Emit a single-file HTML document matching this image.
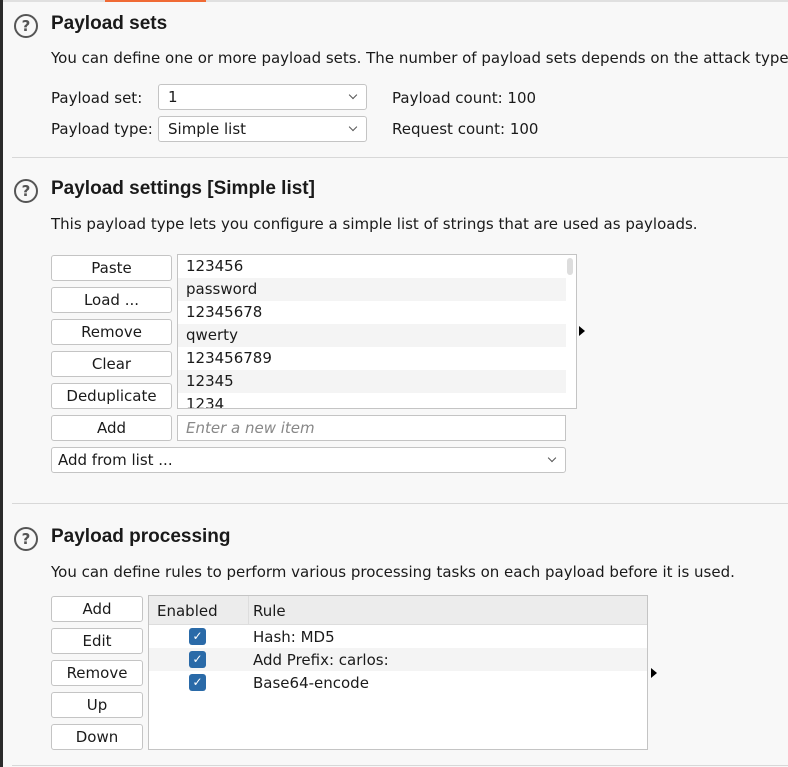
<!DOCTYPE html>
<html><head><style>
*{box-sizing:border-box;margin:0;padding:0}
body{width:788px;height:767px;background:#f8f8f8;font-family:"DejaVu Sans","Liberation Sans",sans-serif;font-size:15px;color:#1a1a1a;position:relative;overflow:hidden}
.a{position:absolute;white-space:nowrap}
.h{font-weight:bold;font-size:19px;font-family:"Liberation Sans",sans-serif}
.q{position:absolute;width:24px;height:24px;border:2px solid #555;border-radius:50%;font-size:15px;font-weight:bold;color:#555;text-align:center;line-height:20px}
.sep{position:absolute;left:12px;right:0;height:1px;background:#d8d8d8}
.btn{position:absolute;background:#fff;border:1px solid #c4c4c4;border-radius:3px;text-align:center;line-height:24px;height:26px}
.sel{position:absolute;background:#fff;border:1px solid #c4c4c4;border-radius:3px;height:26px;line-height:24px;padding-left:9px}
.sel:after{content:"";position:absolute;right:10px;top:7px;width:5px;height:5px;border-right:1px solid #555;border-bottom:1px solid #555;transform:rotate(45deg)}
.row{position:absolute;left:0;width:388px;height:23px;line-height:23px;padding-left:8px}
.cb{position:absolute;left:40px;width:17px;height:17px;background:#2a6aa8;border-radius:3px;color:#fff;font-size:12px;font-weight:bold;text-align:center;line-height:17px}
.tri{position:absolute;width:0;height:0;border-left:6px solid #000;border-top:5px solid transparent;border-bottom:5px solid transparent}
</style></head><body>
<div class="a" style="left:0;top:0;width:3px;height:767px;background:#2b2b2b"></div>
<div class="a" style="left:3px;top:0;width:785px;height:2px;background:#e0e0e0"></div>
<div class="a" style="left:105px;top:0;width:101px;height:2px;background:#f06a35"></div>

<div class="q" style="left:14px;top:14px">?</div>
<div class="a h" style="left:51px;top:13px">Payload sets</div>
<div class="a" style="left:51px;top:49px">You can define one or more payload sets. The number of payload sets depends on the attack type</div>
<div class="a" style="left:51px;top:89px">Payload set:</div>
<div class="sel" style="left:158px;top:84px;width:209px">1</div>
<div class="a" style="left:392px;top:89px">Payload count: 100</div>
<div class="a" style="left:51px;top:120px">Payload type:</div>
<div class="sel" style="left:158px;top:116px;width:209px">Simple list</div>
<div class="a" style="left:392px;top:120px">Request count: 100</div>
<div class="sep" style="top:157px"></div>

<div class="q" style="left:14px;top:179px">?</div>
<div class="a h" style="left:51px;top:178px">Payload settings [Simple list]</div>
<div class="a" style="left:51px;top:215px">This payload type lets you configure a simple list of strings that are used as payloads.</div>
<div class="btn" style="left:51px;top:255px;width:121px">Paste</div>
<div class="btn" style="left:51px;top:287px;width:121px">Load ...</div>
<div class="btn" style="left:51px;top:319px;width:121px">Remove</div>
<div class="btn" style="left:51px;top:351px;width:121px">Clear</div>
<div class="btn" style="left:51px;top:383px;width:121px">Deduplicate</div>
<div class="a" style="left:177px;top:254px;width:400px;height:155px;background:#fff;border:1px solid #c4c4c4;overflow:hidden">
<div class="row" style="top:0">123456</div>
<div class="row" style="top:23px;background:#f4f4f4">password</div>
<div class="row" style="top:46px">12345678</div>
<div class="row" style="top:69px;background:#f4f4f4">qwerty</div>
<div class="row" style="top:92px">123456789</div>
<div class="row" style="top:115px;background:#f4f4f4">12345</div>
<div class="row" style="top:138px">1234</div>
<div class="a" style="left:389px;top:3px;width:6px;height:17px;background:#ddd;border-radius:3px"></div>
</div>
<div class="tri" style="left:579px;top:326px"></div>
<div class="btn" style="left:51px;top:415px;width:121px">Add</div>
<div class="a" style="left:177px;top:415px;width:389px;height:26px;background:#fff;border:1px solid #c4c4c4;line-height:25px;padding-left:8px;font-style:italic;color:#888">Enter a new item</div>
<div class="sel" style="left:51px;top:447px;width:515px;padding-left:6px">Add from list ...</div>
<div class="sep" style="top:503px"></div>

<div class="q" style="left:14px;top:527px">?</div>
<div class="a h" style="left:51px;top:526px">Payload processing</div>
<div class="a" style="left:51px;top:563px">You can define rules to perform various processing tasks on each payload before it is used.</div>
<div class="btn" style="left:51px;top:596px;width:92px">Add</div>
<div class="btn" style="left:51px;top:628px;width:92px">Edit</div>
<div class="btn" style="left:51px;top:660px;width:92px">Remove</div>
<div class="btn" style="left:51px;top:692px;width:92px">Up</div>
<div class="btn" style="left:51px;top:724px;width:92px">Down</div>
<div class="a" style="left:148px;top:595px;width:500px;height:155px;background:#fff;border:1px solid #c4c4c4;overflow:hidden">
<div class="a" style="left:0;top:0;width:500px;height:29px;background:#ececec;border-bottom:1px solid #ddd"></div>
<div class="a" style="left:99px;top:0;width:1px;height:29px;background:#ddd"></div>
<div class="a" style="left:8px;top:6px">Enabled</div>
<div class="a" style="left:104px;top:6px">Rule</div>
<div class="a" style="left:0;top:52px;width:500px;height:23px;background:#f4f4f4"></div>
<div class="cb" style="top:32px">✓</div><div class="a" style="left:104px;top:32px">Hash: MD5</div>
<div class="cb" style="top:55px">✓</div><div class="a" style="left:104px;top:55px">Add Prefix: carlos:</div>
<div class="cb" style="top:78px">✓</div><div class="a" style="left:104px;top:78px">Base64-encode</div>
</div>
<div class="tri" style="left:651px;top:668px"></div>
<div class="sep" style="top:765px"></div>
</body></html>
